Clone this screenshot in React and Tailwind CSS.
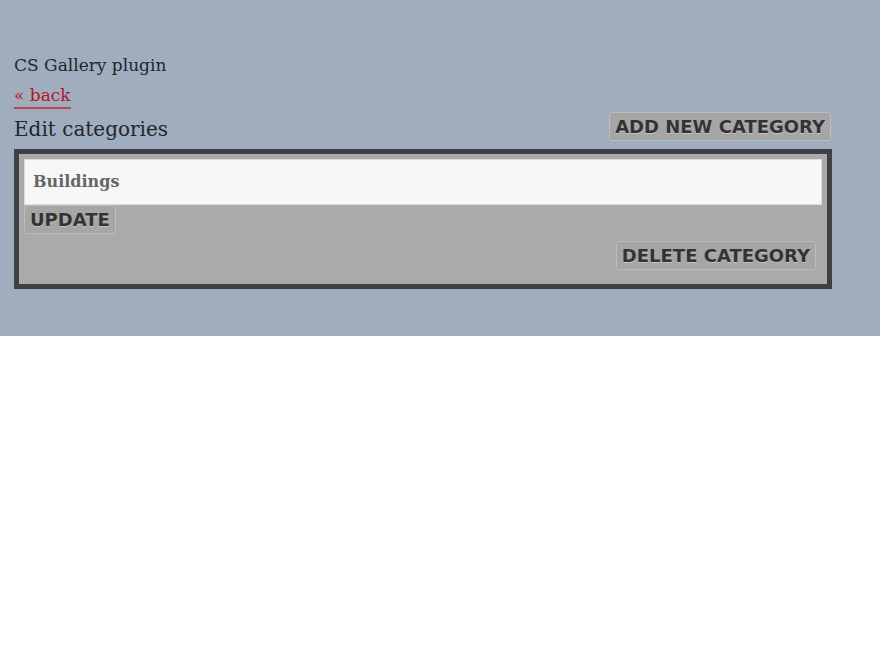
import React from 'react';

const serif = "font-['DejaVu_Serif','Liberation_Serif',serif]";
const btn =
  "font-['DejaVu_Sans','Liberation_Sans',sans-serif] font-bold uppercase text-[#333333] bg-[#a6a6a6] border border-[#bdbdbd] rounded-[3px] leading-[23px] px-[5px] py-[2px] [text-shadow:0_1px_0_rgba(255,255,255,0.35)]";

export default function App() {
  return (
    <div className="min-h-[659px] bg-white">
      <div className={`bg-[#a0adbf] h-[336px] pt-[53px] pl-[14px] ${serif}`}>
        <div className="w-[818px]">
          <p className="text-[17px] leading-[24px] text-[#22262b]">CS Gallery plugin</p>
          <a
            href="#"
            className="inline-block mt-[6px] text-[17px] leading-[24px] text-[#b3151f] border-b-2 border-[#c0454c]"
          >
            « back
          </a>
          <div className="flex items-end justify-between mt-[3px]">
            <h2 className="text-[20px] leading-[30px] text-[#22262b]">Edit categories</h2>
            <button className={`${btn} text-[18px] mb-[3px] mr-[1px]`}>Add new category</button>
          </div>
          <div className="mt-[5px] border-[5px] border-[#3e4043] bg-[#aaaaaa] px-[5px] pt-[5px] pb-[14px]">
            <div className="h-[46px] bg-[#f7f7f7] border border-[#dcdcdc] flex items-center px-[8px]">
              <span className="text-[16px] font-bold text-[#666666]">Buildings</span>
            </div>
            <div>
              <button className={`${btn} text-[18px]`}>Update</button>
            </div>
            <div className="flex justify-end mt-[7px] pr-[6px]">
              <button className={`${btn} text-[18px]`}>Delete category</button>
            </div>
          </div>
        </div>
      </div>
    </div>
  );
}
